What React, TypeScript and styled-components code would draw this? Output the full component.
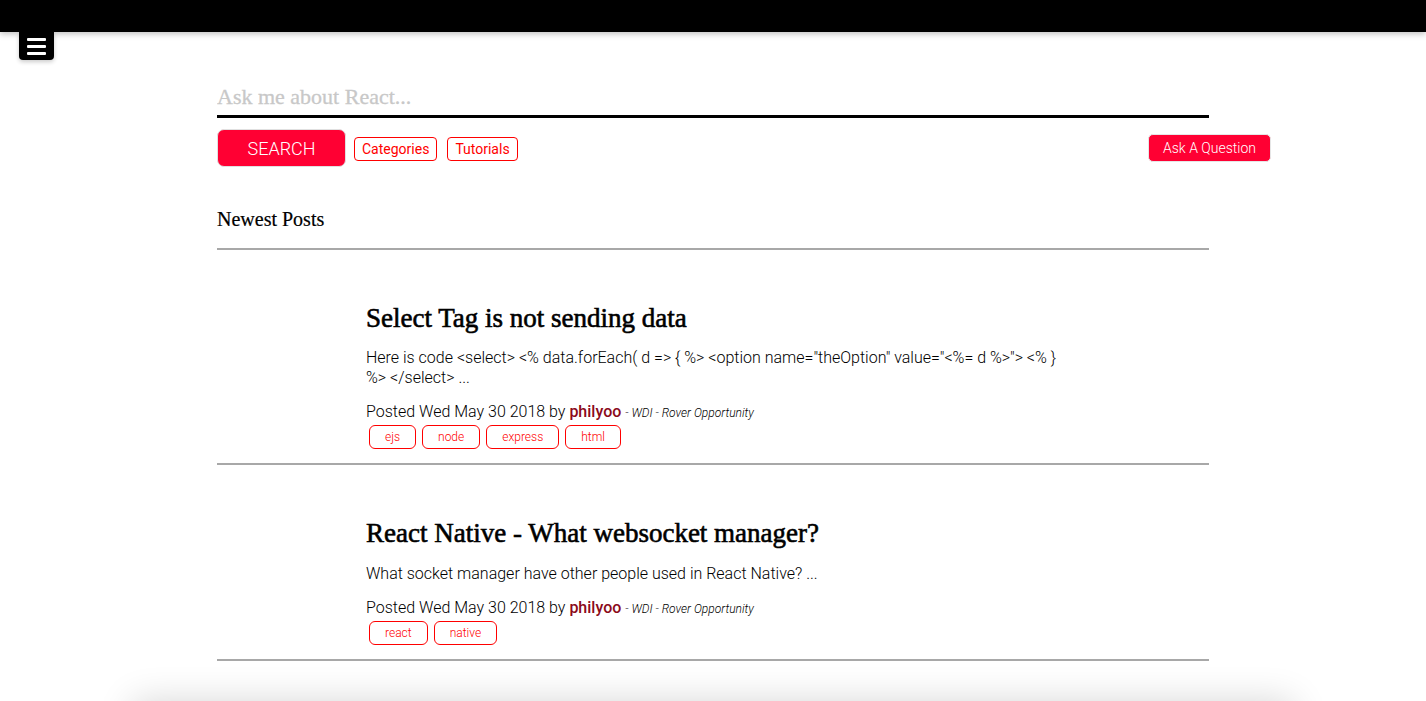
import styled, { createGlobalStyle } from "styled-components";

const GlobalStyle = createGlobalStyle`
  body {
    margin: 0;
    background: #fff;
    font-family: Roboto, "Liberation Sans", sans-serif;
    color: #000;
  }
  * {
    box-sizing: border-box;
  }
`;

const TopBar = styled.header`
  height: 32px;
  background: #000;
  box-shadow: 0 2px 6px rgba(0, 0, 0, 0.25);
`;

const MenuButton = styled.button`
  position: absolute;
  top: 32px;
  left: 19px;
  width: 35px;
  height: 28px;
  background: #000;
  border: none;
  border-radius: 0 0 4px 4px;
  padding: 0;
  display: flex;
  flex-direction: column;
  align-items: center;
  justify-content: center;
  gap: 4px;
  box-shadow: 0 2px 4px rgba(0, 0, 0, 0.2);
  cursor: pointer;

  span {
    display: block;
    width: 19px;
    height: 3px;
    background: #fff;
    border-radius: 1px;
  }
`;

const Main = styled.main`
  width: 992px;
  margin: 0 auto;
  padding-top: 50px;
`;

const SearchInput = styled.input`
  display: block;
  width: 100%;
  height: 36px;
  border: none;
  border-bottom: 3px solid #000;
  outline: none;
  padding: 0 0 3px;
  font-family: "Liberation Serif", serif;
  font-size: 22px;
  color: #000;
  caret-color: #000;
  -webkit-text-stroke: 0.3px #c8c8c8;

  &::placeholder {
    color: #c8c8c8;
  }
`;

const Toolbar = styled.div`
  display: flex;
  align-items: center;
  gap: 8px;
  margin-top: 11px;
  margin-right: -62px;
`;

const SearchButton = styled.button`
  width: 129px;
  height: 38px;
  background: #ff0033;
  color: #fff;
  border: 1px solid #e0e0e0;
  border-radius: 7px;
  font-family: Roboto, sans-serif;
  font-weight: 300;
  font-size: 18px;
`;

const OutlineButton = styled.button`
  height: 24px;
  padding: 0 7px;
  margin-right: 2px;
  margin-top: 2px;
  background: #fff;
  color: #ff0000;
  border: 1px solid #ff0000;
  border-radius: 4px;
  font-family: Roboto, sans-serif;
  font-weight: 400;
  font-size: 14px;
`;

const AskButton = styled.button`
  margin-left: auto;
  height: 28px;
  padding: 0 14px;
  background: #ff0033;
  color: #fff;
  border: 1px solid #e6e6e6;
  border-radius: 5px;
  font-family: Roboto, sans-serif;
  font-weight: 300;
  font-size: 14px;
`;

const SectionTitle = styled.h2`
  margin: 40px 0 0;
  font-family: "Liberation Serif", serif;
  font-weight: 400;
  font-size: 20px;
  line-height: 24px;
  -webkit-text-stroke: 0.2px #000;
`;

const Rule = styled.hr`
  margin: 0;
  border: none;
  border-top: 2px solid #a8a8a8;
`;

const FirstRule = styled(Rule)`
  margin-top: 17px;
`;

const Post = styled.article<{ $spaced?: boolean }>`
  padding: 52px 0 14px 149px;

  p {
    margin-top: ${(props) => (props.$spaced ? "15px" : "14px")};
  }
`;

const PostTitle = styled.h3`
  margin: 0;
  font-family: "Liberation Serif", serif;
  font-weight: 400;
  font-size: 27px;
  line-height: 32px;
  -webkit-text-stroke: 0.6px #000;
`;

const Excerpt = styled.p`
  margin: 14px 0 0;
  max-width: 700px;
  font-weight: 300;
  font-size: 16px;
  line-height: 20px;
`;

const Meta = styled.div`
  margin-top: 14px;
  font-weight: 300;
  font-size: 16px;
  line-height: 20px;
`;

const Author = styled.span`
  color: #8b0a1a;
  font-weight: 500;
`;

const Cohort = styled.span`
  font-style: italic;
  font-weight: 300;
  font-size: 12px;
`;

const Tags = styled.div`
  display: flex;
  gap: 6px;
  margin-top: 2px;
  padding-left: 3px;
`;

const Tag = styled.span`
  display: inline-flex;
  align-items: center;
  height: 24px;
  padding: 0 15px;
  border: 1px solid #ff0000;
  border-radius: 6px;
  color: #ff0000;
  font-weight: 300;
  font-size: 12px;
`;

const FooterCard = styled.div`
  width: 1160px;
  height: 60px;
  margin: 40px auto 0;
  box-shadow: 0 0 36px rgba(0, 0, 0, 0.16);
`;

interface IPost {
  id: number;
  title: string;
  excerpt: string;
  date: string;
  author: string;
  cohort: string;
  tags: string[];
}

const posts: IPost[] = [
  {
    id: 1,
    title: "Select Tag is not sending data",
    excerpt:
      'Here is code <select> <% data.forEach( d => { %> <option name="theOption" value="<%= d %>"> <% } %> </select> ...',
    date: "Wed May 30 2018",
    author: "philyoo",
    cohort: "WDI - Rover Opportunity",
    tags: ["ejs", "node", "express", "html"],
  },
  {
    id: 2,
    title: "React Native - What websocket manager?",
    excerpt: "What socket manager have other people used in React Native? ...",
    date: "Wed May 30 2018",
    author: "philyoo",
    cohort: "WDI - Rover Opportunity",
    tags: ["react", "native"],
  },
];

function App() {
  return (
    <>
      <GlobalStyle />
      <TopBar />
      <MenuButton aria-label="menu">
        <span />
        <span />
        <span />
      </MenuButton>
      <Main>
        <SearchInput placeholder="Ask me about React..." autoFocus />
        <Toolbar>
          <SearchButton>SEARCH</SearchButton>
          <OutlineButton>Categories</OutlineButton>
          <OutlineButton>Tutorials</OutlineButton>
          <AskButton>Ask A Question</AskButton>
        </Toolbar>
        <SectionTitle>Newest Posts</SectionTitle>
        <FirstRule />
        {posts.map((post, i) => (
          <div key={post.id}>
            <Post $spaced={i > 0}>
              <PostTitle>{post.title}</PostTitle>
              <Excerpt>{post.excerpt}</Excerpt>
              <Meta>
                Posted {post.date} by <Author>{post.author}</Author>{" "}
                <Cohort>- {post.cohort}</Cohort>
              </Meta>
              <Tags>
                {post.tags.map((tag) => (
                  <Tag key={tag}>{tag}</Tag>
                ))}
              </Tags>
            </Post>
            <Rule />
          </div>
        ))}
      </Main>
      <FooterCard />
    </>
  );
}

export default App;
